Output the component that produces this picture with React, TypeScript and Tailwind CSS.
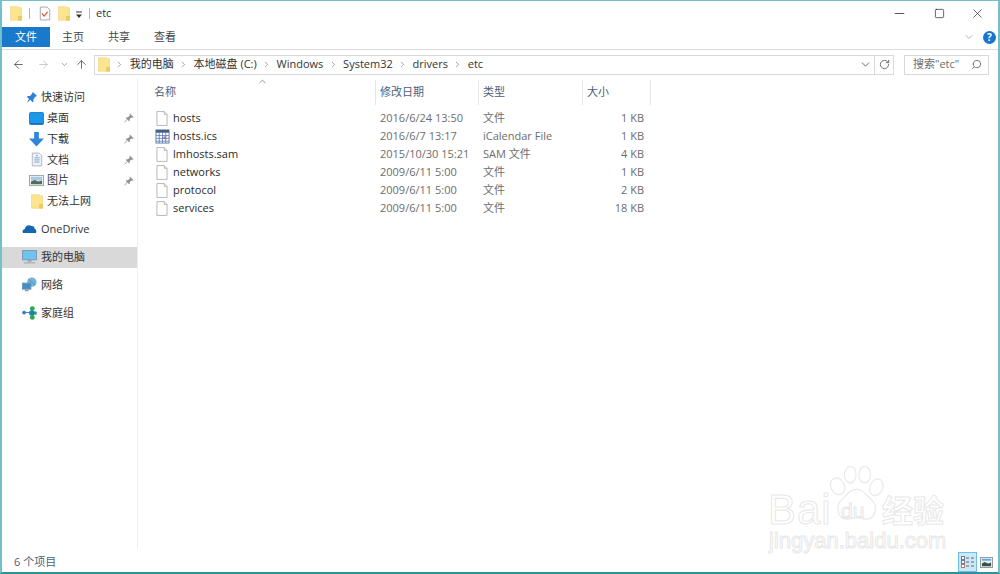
import React from "react";
import {
  ArrowLeft,
  ArrowRight,
  ArrowUp,
  ChevronDown,
  ChevronRight,
  ChevronUp,
  Minus,
  RotateCw,
  Search,
  Square,
  X,
} from "lucide-react";

const Folder = ({ className = "" }: { className?: string }) => (
  <svg viewBox="1.5 1 12.5 15" className={className}>
    <path d="M2 1.5h8.5l1 1H13.5v13H2z" fill="#fde58f" stroke="#ecd07a" strokeWidth="0.6" />
    <rect x="10" y="11" width="4" height="4.8" fill="#eec95c" />
  </svg>
);

const FileIcon = () => (
  <svg viewBox="0 0 13 16" className="w-[12px] h-[15px]">
    <path d="M1 .5h8l3 3v12H1z" fill="#fff" stroke="#b4b4b4" />
    <path d="M9 .5v3h3" fill="#f2f2f2" stroke="#b4b4b4" />
  </svg>
);

const CalendarIcon = () => (
  <svg viewBox="0 0 16 16" className="w-[15px] h-[15px]">
    <rect x="1" y="1" width="14" height="14" fill="#fff" stroke="#6d7f99" />
    <rect x="1" y="1" width="14" height="3" fill="#4a5d85" />
    <path d="M1 7h14M1 10h14M1 13h14M4.5 4v11M8 4v11M11.5 4v11" stroke="#3f74c8" strokeWidth="0.8" />
    <rect x="9" y="8" width="3" height="2.5" fill="#e8603c" />
  </svg>
);

const Pin = () => (
  <svg viewBox="0 0 12 12" className="w-[10px] h-[10px]">
    <path d="M7 .5l4.5 4.5-1 .8-1.4-.3L6.8 7.2l.2 1.8-.9.8L2.2 5.9l.8-.9 1.8.2L7 2.9 6.6 1.4z" fill="#8d9196" />
    <path d="M3.8 7.6L.8 11.2" stroke="#8d9196" />
  </svg>
);

const StarIcon = () => (
  <svg viewBox="0 0 14 14" className="w-[13px] h-[13px]">
    <path d="M8.5 1l4.5 4.5-2 .6-2 3 .3 2.2-1.3.7-2.2-2.6L2 13l2.3-4.6L2 6.5l1-1.2 2.5.2 2-2.5z" fill="#2f80d8" />
  </svg>
);

const DesktopIcon = () => (
  <svg viewBox="0 0 16 14" className="w-[15px] h-[13px]">
    <rect x="0.5" y="0.5" width="15" height="13" rx="1" fill="#1c97ea" stroke="#1a7cc4" />
    <path d="M1 12h14v1H1z" fill="#0f6cb4" />
  </svg>
);

const DownloadIcon = () => (
  <svg viewBox="0 0 16 16" className="w-[15px] h-[15px]">
    <path d="M5.5 0h5v7H16l-8 8.5L0 7h5.5z" fill="#2f86d9" />
  </svg>
);

const DocIcon = () => (
  <svg viewBox="0 0 14 16" className="w-[12px] h-[15px]">
    <path d="M1.5.5h8l3 3v12h-11z" fill="#eef1f5" stroke="#a8b0bb" />
    <path d="M4 6h6M4 8.5h6M4 11h6M6 3.5h2" stroke="#6e9ccc" />
  </svg>
);

const PictureIcon = () => (
  <svg viewBox="0 0 16 14" className="w-[15px] h-[13px]">
    <rect x="0.5" y="1.5" width="15" height="11" fill="#f2f3f5" stroke="#9aa0a8" />
    <rect x="2" y="3" width="12" height="4" fill="#a9c9ea" />
    <path d="M2 11V8l4-1.5L10 8l4-1v4z" fill="#4f6f55" />
  </svg>
);

const CloudIcon = () => (
  <svg viewBox="0 0 16 12" className="w-[15px] h-[11px]">
    <path d="M1 11c-1.2-1.6-.4-4 1.6-4.2C3.4 3 7.6 1 10 3.4c2-.4 3.6 1 3.6 3 1.6.4 2.4 3 1.4 4.6z" fill="#1466b0" />
  </svg>
);

const ComputerIcon = () => (
  <svg viewBox="0 0 16 15" className="w-[15px] h-[14px]">
    <rect x="0.5" y="0.5" width="15" height="10" fill="#6fc3f2" stroke="#7d99ad" />
    <path d="M6 11h4v1.5H6z" fill="#8e9aa5" />
    <path d="M2 13h12v1.5H2z" fill="#a9b6c0" />
  </svg>
);

const NetworkIcon = () => (
  <svg viewBox="0 0 16 16" className="w-[15px] h-[15px]">
    <circle cx="10.5" cy="5.5" r="5" fill="#74b4d8" />
    <path d="M7 2.5l7 6" stroke="#4e93b8" />
    <rect x="0.5" y="6.5" width="9" height="6.5" fill="#3d8fd1" stroke="#7b95a8" />
    <path d="M3 14.5h4" stroke="#8e9aa5" strokeWidth="1.4" />
  </svg>
);

const HomegroupIcon = () => (
  <svg viewBox="0 0 16 15" className="w-[15px] h-[14px]">
    <circle cx="2.2" cy="7" r="2" fill="#2b7fc2" />
    <path d="M4 7h6" stroke="#2b7fc2" />
    <circle cx="11" cy="2.8" r="2.6" fill="#2ea84f" />
    <circle cx="14" cy="7.5" r="2" fill="#2ea84f" />
    <circle cx="11" cy="12.2" r="2.6" fill="#2ea84f" />
    <circle cx="10.5" cy="7.5" r="3" fill="#1f7fb8" />
  </svg>
);

const quickItems = [
  { icon: <DesktopIcon />, label: "桌面", pinned: true },
  { icon: <DownloadIcon />, label: "下载", pinned: true },
  { icon: <DocIcon />, label: "文档", pinned: true },
  { icon: <PictureIcon />, label: "图片", pinned: true },
  { icon: <Folder className="w-[12px] h-[15px]" />, label: "无法上网", pinned: false },
];

const files = [
  { name: "hosts", date: "2016/6/24 13:50", type: "文件", size: "1 KB", icon: <FileIcon /> },
  { name: "hosts.ics", date: "2016/6/7 13:17", type: "iCalendar File", size: "1 KB", icon: <CalendarIcon /> },
  { name: "lmhosts.sam", date: "2015/10/30 15:21", type: "SAM 文件", size: "4 KB", icon: <FileIcon /> },
  { name: "networks", date: "2009/6/11 5:00", type: "文件", size: "1 KB", icon: <FileIcon /> },
  { name: "protocol", date: "2009/6/11 5:00", type: "文件", size: "2 KB", icon: <FileIcon /> },
  { name: "services", date: "2009/6/11 5:00", type: "文件", size: "18 KB", icon: <FileIcon /> },
];

const crumbs = ["我的电脑", "本地磁盘 (C:)", "Windows", "System32", "drivers", "etc"];

const App = () => {
  return (
    <div className="relative w-[1000px] h-[574px] overflow-hidden bg-white flex flex-col border-x-2 border-t border-b-2 border-x-[#74c0c8] border-t-[#74c0c8] border-b-[#2f9299] text-[11px] text-[#2b2b2b] font-['Open_Sans','Noto_Sans_CJK_SC',sans-serif]">
      {/* title bar */}
      <div className="h-[25px] shrink-0 flex items-center pl-[8px]">
        <Folder className="w-[12px] h-[15px]" />
        <div className="w-px h-[11px] bg-[#b5b5b5] ml-[7px] mr-[9px]" />
        <svg viewBox="0 0 14 16" className="w-[12px] h-[15px]">
          <path d="M1.5.5h8l3 3v12h-11z" fill="#fff" stroke="#9c9c9c" />
          <path d="M3.5 8l2.5 3 4-5" fill="none" stroke="#e0552f" strokeWidth="1.4" />
        </svg>
        <Folder className="w-[12px] h-[15px] ml-[7px]" />
        <svg viewBox="0 0 8 8" className="w-[8px] h-[8px] ml-[5px] mt-[2px]">
          <path d="M1 1h6" stroke="#333" />
          <path d="M1 3.5h6L4 7z" fill="#333" />
        </svg>
        <div className="w-px h-[11px] bg-[#b5b5b5] ml-[6px] mr-[6px]" />
        <span className="text-[#333]">etc</span>
        <div className="ml-auto flex items-center text-[#222] pr-[2px]">
          <div className="w-[40px] flex justify-center"><Minus size={15} strokeWidth={1.2} /></div>
          <div className="w-[40px] flex justify-center"><Square size={11} strokeWidth={1.5} /></div>
          <div className="w-[37px] flex justify-center"><X size={15} strokeWidth={1.1} /></div>
        </div>
      </div>

      {/* ribbon tabs */}
      <div className="h-[24px] shrink-0 flex items-start pt-px border-b border-[#dadbdc] text-[#444]">
        <div className="w-[48px] h-[20px] flex items-center justify-center bg-[#1979ca] text-white">文件</div>
        <div className="w-[46px] h-[20px] flex items-center justify-center">主页</div>
        <div className="w-[46px] h-[20px] flex items-center justify-center">共享</div>
        <div className="w-[46px] h-[20px] flex items-center justify-center">查看</div>
        <div className="ml-auto h-[20px] flex items-center pr-[2px]">
          <ChevronDown size={12} className="text-[#aeb4bb] mr-[8px]" />
          <div className="w-[13px] h-[13px] rounded-full bg-[#1a73d0] text-white text-[10px] font-bold flex items-center justify-center">?</div>
        </div>
      </div>

      {/* address row */}
      <div className="h-[29px] shrink-0 flex items-center">
        <div className="w-[94px] pl-[10px] flex items-center text-[#555]">
          <ArrowLeft size={13} strokeWidth={1.6} />
          <ArrowRight size={13} strokeWidth={1.6} className="ml-[12px] text-[#c4c4c4]" />
          <ChevronDown size={9} strokeWidth={2} className="ml-[10px] text-[#888]" />
          <ArrowUp size={13} strokeWidth={1.6} className="ml-[6px]" />
        </div>
        <div className="w-[800px] h-[20px] ml-[-2px] flex items-center border border-[#d9d9d9]">
          <Folder className="w-[12px] h-[15px] ml-[3px]" />
          {crumbs.map((c) => (
            <div key={c} className="flex items-center">
              <ChevronRight size={9} strokeWidth={1.6} className="text-[#666] mx-[5.4px]" />
              <span className="text-[#333]">{c}</span>
            </div>
          ))}
          <ChevronDown size={13} strokeWidth={1.6} className="ml-auto mr-[2px] text-[#555]" />
          <div className="w-[19px] h-full border-l border-[#d9d9d9] flex items-center justify-center">
            <RotateCw size={11} className="text-[#666]" />
          </div>
        </div>
        <div className="w-[85px] h-[20px] ml-[10px] flex items-center justify-between border border-[#d9d9d9] pl-[8px] pr-[6px] text-[#6d6d6d]">
          <span>搜索"etc"</span>
          <Search size={11} className="scale-x-[-1]" />
        </div>
      </div>

      {/* main area */}
      <div className="flex-1 min-h-0 flex">
        <nav className="w-[136px] shrink-0 border-r border-[#eeeeee] pt-[8px] text-[#333]">
          <div className="h-[20px] flex items-center pl-[23px] gap-[3px]">
            <StarIcon />
            <span>快速访问</span>
          </div>
          <div className="pt-[1px]">
            {quickItems.map((item) => (
              <div key={item.label} className="h-[20.75px] flex items-center pl-[26px] pr-[3px]">
                <div className="w-[17px] flex justify-center">{item.icon}</div>
                <span className="ml-[2px]">{item.label}</span>
                {item.pinned && <span className="ml-auto"><Pin /></span>}
              </div>
            ))}
          </div>
          <div className="h-[20px] mt-[7px] flex items-center pl-[20px] gap-[4px]">
            <CloudIcon />
            <span>OneDrive</span>
          </div>
          <div className="h-[21px] mt-[8px] flex items-center pl-[20px] gap-[4px] bg-[#d9d9d9]">
            <ComputerIcon />
            <span>我的电脑</span>
          </div>
          <div className="h-[20px] mt-[7px] flex items-center pl-[20px] gap-[4px]">
            <NetworkIcon />
            <span>网络</span>
          </div>
          <div className="h-[20px] mt-[8px] flex items-center pl-[20px] gap-[4px]">
            <HomegroupIcon />
            <span>家庭组</span>
          </div>
        </nav>

        <main className="flex-1 min-w-0 relative">
          <ChevronUp size={11} className="absolute left-[119px] top-[-3px] text-[#8a8a8a]" />
          <div className="h-[25px] mt-[1px] flex items-center text-[#4c607a]">
            <div className="w-[237px] h-full flex items-center pl-[16px]">名称</div>
            <div className="w-[103px] h-full flex items-center pl-[4px] border-l border-[#e5e5e5]">修改日期</div>
            <div className="w-[104px] h-full flex items-center pl-[4px] border-l border-[#e5e5e5]">类型</div>
            <div className="w-[69px] h-full flex items-center pl-[4px] border-x border-[#e5e5e5]">大小</div>
          </div>
          <div className="pt-[4px]">
            {files.map((f) => (
              <div key={f.name} className="h-[18px] flex items-center text-[#6d6d6d]">
                <div className="w-[237px] flex items-center pl-[16px]">
                  <div className="w-[16px] flex justify-center">{f.icon}</div>
                  <span className="ml-[3px] text-[#2b2b2b]">{f.name}</span>
                </div>
                <div className="w-[103px] pl-[5px]">{f.date}</div>
                <div className="w-[104px] pl-[5px]">{f.type}</div>
                <div className="w-[62px] text-right">{f.size}</div>
              </div>
            ))}
          </div>
        </main>
      </div>

      {/* status bar */}
      <div className="h-[23px] shrink-0 flex items-end pl-[12px] text-[#4c607a]">
        <span className="pb-[2px]">6 个项目</span>
        <div className="ml-auto flex items-center pr-[2px]">
          <div className="w-[19px] h-[20px] bg-[#cce8f7] border border-[#6cc0ea] flex items-center justify-center">
            <svg viewBox="0 0 14 12" className="w-[14px] h-[12px]">
              <rect x="0.5" y="0.5" width="3" height="3" fill="#fff" stroke="#6d7a88" />
              <rect x="0.5" y="4.5" width="3" height="3" fill="#fff" stroke="#6d7a88" />
              <rect x="0.5" y="8.5" width="3" height="3" fill="#fff" stroke="#c9785c" />
              <path d="M5 2h3M10 2h3M5 6h3M10 6h3M5 10h3M10 10h3" stroke="#5b6672" />
            </svg>
          </div>
          <div className="w-[19px] flex justify-center">
            <svg viewBox="0 0 14 12" className="w-[13px] h-[11px]">
              <rect x="0.5" y="0.5" width="13" height="11" fill="#eef1f4" stroke="#8b949d" />
              <rect x="2" y="2" width="10" height="2" fill="#5aa4e6" />
              <path d="M2 10V7l3-1.5L9 7l3-1v4z" fill="#35554a" />
            </svg>
          </div>
        </div>
      </div>

      {/* watermark */}
      <div className="absolute left-[764px] top-[464px] w-[190px] h-[90px] pointer-events-none">
        <svg viewBox="0 0 60 62" className="absolute left-[62px] top-[1px] w-[58px] h-[60px]" fill="#fff" stroke="#e8e8e8" strokeWidth="1.2">
          <ellipse cx="10" cy="21" rx="7" ry="9" transform="rotate(-25 10 21)" />
          <ellipse cx="23" cy="9" rx="6" ry="8.5" />
          <ellipse cx="38" cy="9" rx="6" ry="8.5" />
          <ellipse cx="50" cy="22" rx="6.5" ry="9" transform="rotate(25 50 22)" />
          <path d="M30 24c7 0 10 7 15 11 6 5 6 20-6 20-4 0-6-2-9-2s-6 2-10 2c-11 0-12-14-6-20 5-4 8-11 16-11z" />
        </svg>
        <div className="absolute left-[2px] top-[27px] text-[42px] leading-[36px] font-['Liberation_Sans',sans-serif] tracking-[1px] text-white [-webkit-text-stroke:1px_#e8e8e8]">Bai</div>
        <div className="absolute left-[75px] top-[34px] text-[21px] leading-[24px] font-['Liberation_Sans',sans-serif] text-white [-webkit-text-stroke:1px_#e8e8e8]">du</div>
        <div className="absolute left-[116px] top-[28px] text-[31px] leading-[32px] font-['Noto_Sans_CJK_SC',sans-serif] font-bold text-white [-webkit-text-stroke:1px_#e8e8e8]">经验</div>
        <div className="absolute left-[3px] top-[64px] text-[22px] leading-[24px] font-['Liberation_Sans',sans-serif] text-white [-webkit-text-stroke:1px_#e8e8e8]">jingyan.baidu.com</div>
      </div>
    </div>
  );
};

export default App;
